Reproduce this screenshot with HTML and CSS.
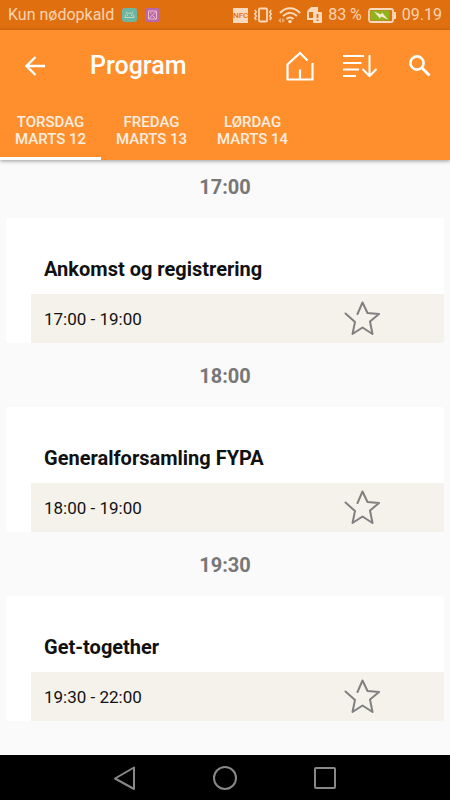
FILE: index.html
```
<!DOCTYPE html>
<html lang="da">
<head>
<meta charset="utf-8">
<meta name="viewport" content="width=device-width, initial-scale=1">
<title>Program</title>
<link rel="stylesheet" href="styles.css">
</head>
<body>
<svg class="defs" aria-hidden="true">
  <symbol id="star" viewBox="0 0 36 36"><path d="M1.500 12.500 11 21 8.500 33 18.500 26.500 28.500 33 26 20.500 35 13 23.500 12 18.500 1.500 13.500 13"/></symbol>
</svg>
<div class="status">
  <span>Kun nødopkald</span>
  <svg class="app-icon" viewBox="0 0 15 14"><rect width="15" height="14" rx="3" fill="#6cb5a3"/><path d="M3 9.500C3 3.500 12 3.500 12 9.500ZM4 3.500 5.200 5.200M11 3.500 9.800 5.200" fill="none" stroke="#c5d8bf"/><path d="M5 7.500h1M9 7.500h1" stroke="#c5d8bf"/></svg>
  <svg class="app-icon" viewBox="0 0 15 14"><rect width="15" height="14" rx="3" fill="#b867ad"/><path d="M3.500 3h8v8h-8ZM4 10.500 11 3.500M7.500 7.500 10.500 10.500M5 5h1.500" fill="none" stroke="#ecc0c4"/></svg>
  <div class="indicators">
    <span class="nfc">NFC</span>
    <svg class="vibrate" viewBox="0 0 18 16" fill="none" stroke="#fbd9bc"><rect x="5" y="1.500" width="8" height="13" rx="1" stroke-width="1.800"/><path d="M.8 3 2.300 5 .8 7 2.300 9 .8 11 2.300 13M17.200 3 15.700 5 17.200 7 15.700 9 17.200 11 15.700 13" stroke-width="1.500"/></svg>
    <svg class="wifi" viewBox="0 0 23 17" fill="none" stroke="#fbd9bc" stroke-width="2"><path d="M2 6C8-.2 16-.2 22 6M5 9C9.500 4.800 14.500 4.800 19 9M8.500 12C11 9.800 13 9.800 15.500 12"/><circle cx="12" cy="14.500" r="1.800" fill="#fbd9bc" stroke="none"/><path d="M0 13.500 3 11v5Z" fill="#f0a96c" stroke="none"/><path d="M7 13.500 4 11v5Z" fill="#f0a96c" stroke="none"/></svg>
    <svg class="sim" viewBox="0 0 15 16"><path d="M1 4.500 4.500 1H10v4M1 4.500V12h6" fill="none" stroke="#fbd9bc" stroke-width="2"/><path d="M1 4.500 4.500 1H10v4H1Z" fill="#fbd9bc"/><rect x="6" y="5" width="9" height="11" rx="1" fill="#fbd9bc"/><path d="M10.500 7v4M10.500 12.500v1.500" stroke="#e06f10" stroke-width="1.800"/></svg>
    <span>83 %</span>
    <svg class="battery" viewBox="0 0 28 15"><rect x="1" y="1" width="24" height="13" rx="2" fill="none" stroke="#fbd9bc" stroke-width="1.800"/><path d="M2.500 2.500h19v10h-19Z" fill="#8fb51e"/><path d="M26 4h2v7h-2Z" fill="#fbd9bc"/><path d="M6 3.500 13 6.500 14 4.500 20 11.500 13 8.500 12 10.500Z" fill="#fbe9d0"/></svg>
    <span>09.19</span>
  </div>
</div>
<header class="header">
  <div class="toolbar">
    <button class="icon-btn back" aria-label="Tilbage"><svg width="20" height="20" viewBox="0 0 20 20"><path d="M20 10H1.500M10.500 1 1.500 10l9 9" stroke-width="2.300"/></svg></button>
    <h1>Program</h1>
    <button class="icon-btn" aria-label="Hjem"><svg width="28" height="30" viewBox="0 0 28 30"><path d="M21.500 9.500 14 2 1.500 13.500V28.500H26.500V12M14 28V18.500" stroke-width="2.200"/></svg></button>
    <button class="icon-btn sort" aria-label="Sorter"><svg width="34" height="24" viewBox="0 0 34 24"><path d="M0 2H21M0 9H18.500M0 15.500H16M0 22H13M26.500 1V22M19.500 15 26.500 22 33.500 15" stroke-width="2"/></svg></button>
    <button class="icon-btn search" aria-label="Søg"><svg width="22" height="22" viewBox="0 0 22 22"><circle cx="8" cy="8" r="6.600" stroke-width="2.600"/><path d="M13 13 20.500 20.500" stroke-width="3"/></svg></button>
  </div>
  <nav class="tabs">
    <a class="active" href="#">TORSDAG<br>MARTS 12</a>
    <a href="#">FREDAG<br>MARTS 13</a>
    <a href="#">LØRDAG<br>MARTS 14</a>
  </nav>
</header>
<main class="program">
  <section>
    <h2>17:00</h2>
    <article class="card">
      <h3>Ankomst og registrering</h3>
      <div class="card-foot"><span>17:00 - 19:00</span><button aria-label="Føj til favoritter"><svg><use href="#star"/></svg></button></div>
    </article>
  </section>
  <section>
    <h2>18:00</h2>
    <article class="card">
      <h3>Generalforsamling FYPA</h3>
      <div class="card-foot"><span>18:00 - 19:00</span><button aria-label="Føj til favoritter"><svg><use href="#star"/></svg></button></div>
    </article>
  </section>
  <section>
    <h2>19:30</h2>
    <article class="card">
      <h3>Get-together</h3>
      <div class="card-foot"><span>19:30 - 22:00</span><button aria-label="Føj til favoritter"><svg><use href="#star"/></svg></button></div>
    </article>
  </section>
</main>
<footer class="navbar">
  <button aria-label="Tilbage"><svg viewBox="0 0 24 24"><path d="M2 12.500 21 1.500V23Z"/></svg></button>
  <button aria-label="Startskærm"><svg viewBox="0 0 24 24"><circle cx="12" cy="12" r="11"/></svg></button>
  <button aria-label="Seneste apps"><svg viewBox="0 0 24 24"><rect x="2" y="2" width="20" height="20" rx="1"/></svg></button>
</footer>
</body>
</html>
```
FILE: styles.css
```
* {
  box-sizing: border-box;
}

body {
  margin: 0;
  min-height: 100vh;
  display: flex;
  flex-direction: column;
  background: #fafafa;
  color: #111;
  font-family: Roboto, "Liberation Sans", sans-serif;
}

h1, h2, h3 {
  margin: 0;
}

button {
  padding: 0;
  border: 0;
  background: none;
}

svg {
  display: block;
  flex: none;
}

.defs {
  position: absolute;
  width: 0;
  height: 0;
}

.status {
  height: 30px;
  padding: 0 8px;
  display: flex;
  align-items: center;
  gap: 8px;
  background: #e06f10;
  color: #fbd3b0;
  font-size: 16px;
  line-height: 20px;
  white-space: nowrap;
}

.app-icon {
  width: 15px;
  height: 14px;
}

.indicators {
  margin-left: auto;
  display: flex;
  align-items: center;
  gap: 6px;
}

.nfc {
  width: 15px;
  height: 15px;
  display: flex;
  justify-content: center;
  background: #fbd9bc;
  color: #e06f10;
  font-size: 8px;
  line-height: 15px;
  font-weight: 500;
}

.vibrate {
  width: 18px;
  height: 16px;
}

.wifi {
  width: 23px;
  height: 17px;
}

.sim {
  width: 15px;
  height: 16px;
}

.battery {
  width: 28px;
  height: 15px;
}

.header {
  background: #ff8e2d;
  color: #fff;
  box-shadow: 0 1px 4px rgba(0, 0, 0, 0.4);
}

.toolbar {
  height: 70px;
  padding: 2px 19px 0 25px;
  display: flex;
  align-items: center;
}

.toolbar h1 {
  flex: 1;
  font-size: 25px;
  line-height: 32px;
  font-weight: 500;
}

.icon-btn svg {
  fill: none;
  stroke: #fff;
}

.back {
  margin-right: 45px;
}

.sort {
  margin: 0 32px 0 29px;
}

.tabs {
  height: 60px;
  display: flex;
}

.tabs a {
  padding: 14px 15px 0;
  border-bottom: 3px solid transparent;
  color: #ffeee0;
  font-size: 15px;
  line-height: 17px;
  font-weight: 500;
  text-align: center;
  text-decoration: none;
  white-space: nowrap;
}

.tabs .active {
  border-bottom-color: #fff;
}

.program {
  flex: 1;
  padding: 0 6px;
  display: flex;
  flex-direction: column;
  gap: 6px;
}

.program h2 {
  padding: 15px 0 19px;
  color: #777;
  font-size: 20px;
  line-height: 24px;
  font-weight: 700;
  text-align: center;
}

.card {
  padding-left: 25px;
  border-radius: 3px;
  background: #fff;
  overflow: hidden;
}

.card h3 {
  padding: 39px 13px 13px;
  font-size: 20px;
  line-height: 24px;
  font-weight: 700;
}

.card-foot {
  height: 49px;
  padding: 0 64px 0 13px;
  display: flex;
  align-items: center;
  justify-content: space-between;
  background: #f5f2eb;
  font-size: 17px;
}

.card-foot svg {
  width: 36px;
  height: 36px;
  fill: none;
  stroke: #808080;
  stroke-width: 2;
  stroke-linecap: round;
  stroke-linejoin: round;
}

.navbar {
  height: 45px;
  display: flex;
  align-items: center;
  justify-content: center;
  gap: 76px;
  background: #000;
}

.navbar svg {
  width: 24px;
  height: 24px;
  fill: none;
  stroke: #888;
  stroke-width: 2;
  stroke-linejoin: round;
}
```
